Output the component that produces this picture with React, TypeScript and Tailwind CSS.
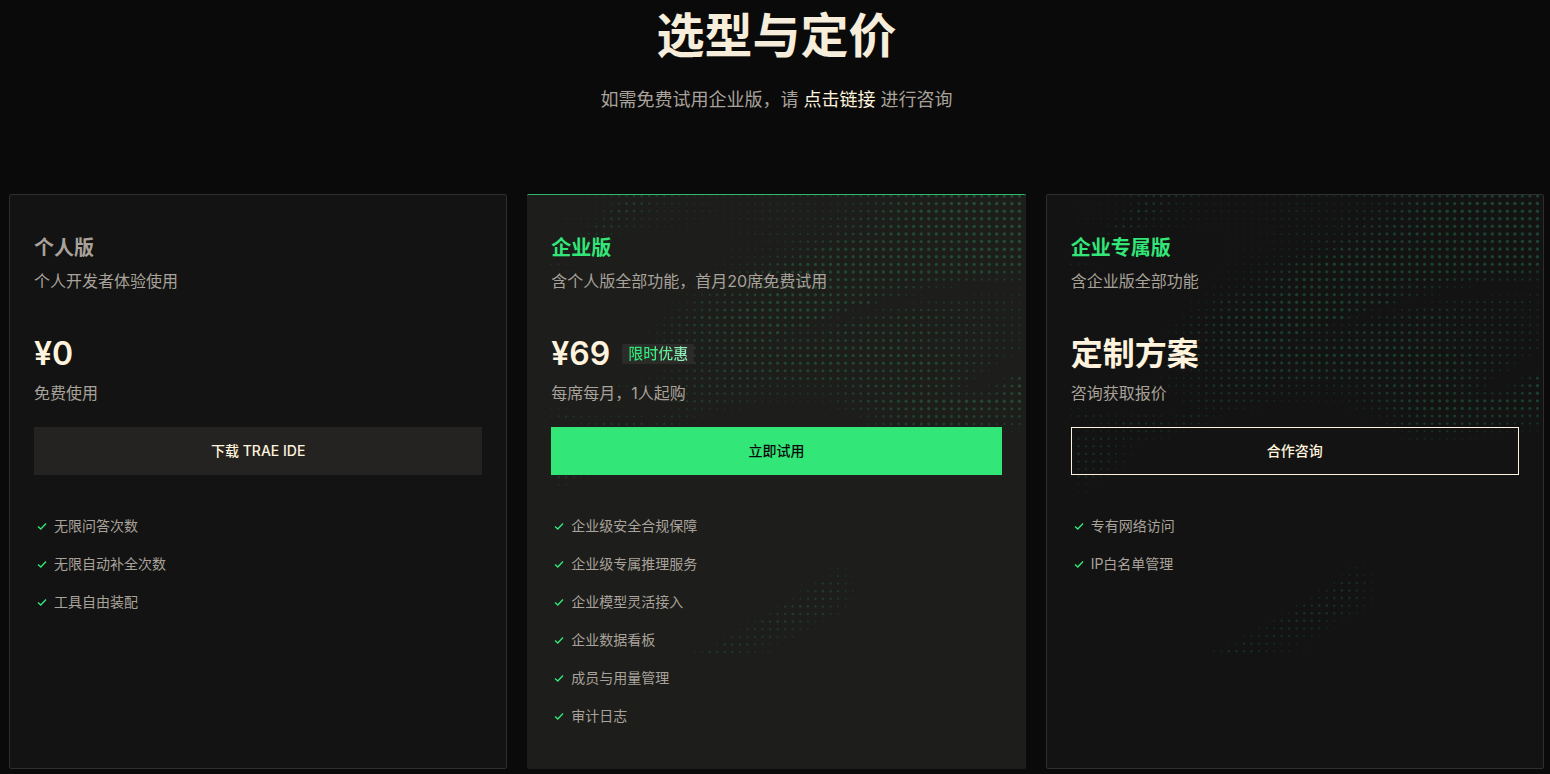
import React from 'react';

interface Plan {
  name: string;
  description: string;
  price: string;
  badge?: string;
  note: string;
  action: string;
  features: string[];
  variant: 'personal' | 'business' | 'dedicated';
}

const plans: Plan[] = [
  {
    name: '个人版',
    description: '个人开发者体验使用',
    price: '¥0',
    note: '免费使用',
    action: '下载 TRAE IDE',
    features: ['无限问答次数', '无限自动补全次数', '工具自由装配'],
    variant: 'personal',
  },
  {
    name: '企业版',
    description: '含个人版全部功能，首月20席免费试用',
    price: '¥69',
    badge: '限时优惠',
    note: '每席每月，1人起购',
    action: '立即试用',
    features: [
      '企业级安全合规保障',
      '企业级专属推理服务',
      '企业模型灵活接入',
      '企业数据看板',
      '成员与用量管理',
      '审计日志',
    ],
    variant: 'business',
  },
  {
    name: '企业专属版',
    description: '含企业版全部功能',
    price: '定制方案',
    note: '咨询获取报价',
    action: '合作咨询',
    features: ['专有网络访问', 'IP白名单管理'],
    variant: 'dedicated',
  },
];

const styles = {
  personal: {
    card: 'border border-[#2e2e2e] bg-[#131313]',
    name: 'text-[#a8a29a]',
    button: 'bg-[#252321] text-[#fff3de]',
  },
  business: {
    card: 'border-t border-[#30b868] bg-[#1d1d1b]',
    name: 'text-[#32e678]',
    button: 'bg-[#32e678] text-[#0a0a0a]',
  },
  dedicated: {
    card: 'border border-[#2e2e2e] bg-[#131313]',
    name: 'text-[#32e678]',
    button: 'border border-[#fff3de] text-[#fff3de]',
  },
};

// Halftone wave: row number -> "column:level" stops, levels 0-9 are blended between stops
const waveRows: Record<number, string> = {
  0: '1:0 6:1 9:4 12:5 15:4 18:2 24:1 29:2 36:3 45:6 55:8 62:8',
  1: '1:1 7:1 9:4 10:6 12:5 14:3 18:2 24:1 29:3 36:2 42:4 46:7 55:9 62:9',
  2: '1:0 6:1 8:4 9:6 11:5 14:2 20:2 25:1 29:3 36:2 40:4 45:7 50:9 62:9',
  3: '1:1 6:2 8:5 10:4 14:2 22:1 29:3 33:2 37:4 42:6 48:8 62:9',
  4: '4:0 6:4 7:5 10:3 15:1 25:1 30:2 35:3 41:6 47:8 62:9',
  5: '3:0 5:3 7:3 10:0 20:0 25:1 30:3 35:3 39:6 45:8 62:9',
  6: '2:0 4:2 5:4 7:1 10:0 20:0 26:1 30:2 35:5 40:7 62:9',
  7: '2:0 4:3 6:0 20:0 24:1 28:2 31:3 34:5 36:7 40:8 62:9',
  8: '20:0 23:1 27:2 30:4 35:7 40:8 62:9',
  9: '0:2 1:3 2:2 5:0 20:0 25:2 28:4 30:6 34:8 62:8',
  10: '0:0 2:1 4:0 19:0 23:2 27:5 31:7 36:8 58:8 62:6',
  11: '18:0 22:2 26:5 31:8 40:8 48:7 55:5 57:4 62:4',
  12: '17:0 20:2 24:4 27:6 31:8 43:7 46:6 48:5 50:3 53:2 54:0 61:0 62:1',
  13: '16:0 20:3 22:5 26:6 30:8 42:7 46:4 48:2 50:0 55:0 56:2 60:1 62:3',
  14: '15:0 18:2 20:5 25:6 29:8 36:8 42:7 43:4 44:1 46:0 47:1 50:3 53:4 60:4 62:2',
  15: '15:0 16:1 18:3 20:5 26:8 36:8 39:6 40:2 42:1 44:3 48:5 55:5 60:3 62:3',
  16: '14:0 16:3 18:5 21:7 27:8 36:8 37:4 39:1 40:3 43:5 47:7 52:6 58:4 62:3',
  17: '12:0 14:1 16:4 20:6 30:8 34:7 35:2 37:3 39:6 47:7 52:5 57:5 62:3',
  18: '11:0 14:2 17:5 23:7 30:8 32:5 35:5 39:7 50:7 58:5 62:3',
  19: '10:0 13:1 16:4 20:6 28:8 30:5 34:6 45:7 50:6 56:5 62:3',
  20: '10:0 14:2 18:5 24:7 29:7 45:8 52:6 57:5 62:3',
  21: '10:0 15:3 18:5 24:7 35:8 48:8 54:6 59:4 61:2 62:0',
  22: '9:0 13:2 18:5 24:7 50:8 55:6 58:4 59:2 60:0',
  23: '10:0 14:1 18:4 24:7 50:7 55:5 57:3 58:2 59:0 61:0 62:1',
  24: '8:0 14:2 18:4 24:6 52:7 55:5 56:2 57:0 59:0 60:2 61:5 62:7',
  25: '5:0 8:2 16:3 20:6 26:6 29:4 34:3 38:4 42:7 50:7 53:6 55:3 56:0 57:0 58:2 59:4 60:6 62:8',
  26: '12:0 16:3 22:5 28:4 33:3 36:3 42:6 50:7 54:5 57:4 59:6 62:8',
  27: '14:0 17:4 20:5 24:4 28:2 32:1 36:1 39:4 42:6 48:8 62:8',
  28: '0:1 1:2 2:1 3:0 15:0 18:3 20:3 26:0 36:0 37:1 41:4 45:7 50:8 62:7',
  29: '0:1 1:3 2:4 5:2 7:1 9:3 12:2 13:0 15:3 16:4 18:3 21:0 38:0 40:1 42:3 46:6 50:7 62:6',
  30: '2:0 4:2 7:4 12:4 13:2 15:4 18:1 19:0 41:0 42:2 44:4 47:6 54:6 58:4 62:4',
  31: '1:1 5:2 9:3 12:3 17:0 42:0 46:3 50:4 56:2 62:1',
  32: '0:2 1:4 4:4 8:3 14:0 43:0 46:3 50:2 58:0',
  33: '0:1 1:4 5:4 9:1 10:0',
  34: '0:1 1:5 5:4 7:2 9:0',
  35: '0:1 1:4 4:4 7:2 8:0',
  36: '0:1 1:4 4:3 7:1 8:0',
  37: '0:1 1:4 3:3 5:1 6:0',
  38: '1:2 3:1 5:0',
  39: '1:1 2:1 3:0',
  49: '37:1 38:2 39:1',
  50: '36:1 38:3 39:2 41:0',
  51: '34:0 35:2 36:4 38:4 39:3 40:1',
  52: '33:1 34:3 36:5 38:4 40:2 41:0',
  53: '31:0 32:2 34:4 36:5 38:4 40:1',
  54: '29:0 30:2 31:4 33:5 36:4 38:3 41:0',
  55: '27:0 29:2 30:4 32:5 36:4 38:2 40:0',
  56: '25:0 27:2 28:4 31:5 33:4 35:2 38:0',
  57: '24:0 26:3 30:4 33:3 36:0',
  58: '22:0 24:3 29:4 32:2 34:0',
  59: '20:0 22:2 23:4 26:4 29:2 32:0',
  60: '18:0 19:2 20:2 21:4 24:4 27:2 32:0',
};

const dots = Object.entries(waveRows).flatMap(([row, value]) => {
  const stops = value.split(' ').map((stop) => stop.split(':').map(Number));
  const result: { x: number; y: number; level: number }[] = [];
  for (let col = stops[0][0]; col <= stops[stops.length - 1][0]; col++) {
    const next = stops.findIndex((stop) => stop[0] >= col);
    const [endCol, endLevel] = stops[next];
    const [startCol, startLevel] = stops[Math.max(next - 1, 0)];
    const ratio = endCol === startCol ? 1 : (col - startCol) / (endCol - startCol);
    const level = startLevel + (endLevel - startLevel) * ratio;
    if (level > 0) {
      result.push({ x: 24 + col * 7.55, y: 1 + Number(row) * 7.6, level });
    }
  }
  return result;
});

const DotWave: React.FC = () => (
  <svg
    className="pointer-events-none absolute inset-0 h-full w-full"
    viewBox="0 0 498 574"
    preserveAspectRatio="none"
    aria-hidden="true"
  >
    {dots.map((dot) => (
      <circle
        key={`${dot.x}-${dot.y}`}
        cx={dot.x}
        cy={dot.y}
        r={0.8 + dot.level * 0.11}
        fill="#34d884"
        opacity={0.05 + dot.level * 0.022}
      />
    ))}
  </svg>
);

const CheckIcon: React.FC = () => (
  <svg className="size-4 shrink-0" viewBox="0 0 16 16" fill="none" aria-hidden="true">
    <path d="M4 8.4L6.8 11L12 5.4" stroke="#32e678" strokeWidth="1.4" />
  </svg>
);

const PlanCard: React.FC<{ plan: Plan }> = ({ plan }) => {
  const style = styles[plan.variant];

  return (
    <article className={`relative rounded-xs px-6 pt-[41px] pb-[42px] ${style.card}`}>
      {plan.variant !== 'personal' && <DotWave />}
      <div className="relative">
        <h2 className={`text-xl leading-6 font-bold ${style.name}`}>{plan.name}</h2>
        <p className="mt-[9px] text-base leading-6 text-[#a8a29a]">{plan.description}</p>

        <div className="mt-[37px] flex h-12 items-center gap-3">
          <strong className="text-[32px] leading-12 font-semibold text-[#fff3de]">{plan.price}</strong>
          {plan.badge && (
            <span className="rounded-xs bg-[#2b2b29] px-1.5 text-[15px] leading-5 font-medium">
              <span className="bg-linear-to-r from-[#32e678] from-40% to-[#9ceec6] bg-clip-text text-transparent">
                {plan.badge}
              </span>
            </span>
          )}
        </div>
        <p className="mt-[3px] text-base leading-6 text-[#a8a29a]">{plan.note}</p>

        <button type="button" className={`mt-[22px] h-12 w-full text-sm font-medium ${style.button}`}>
          {plan.action}
        </button>

        <ul className="mt-10 flex flex-col gap-4">
          {plan.features.map((feature) => (
            <li key={feature} className="flex items-center gap-1 text-sm leading-[22px] text-[#a8a29a]">
              <CheckIcon />
              {feature}
            </li>
          ))}
        </ul>
      </div>
    </article>
  );
};

const App: React.FC = () => {
  return (
    <main
      lang="zh-CN"
      className="min-h-screen bg-[#0a0a0a] pr-1.5 pb-1 pl-[9px] font-[Inter,'Noto_Sans_CJK_SC',sans-serif]"
    >
      <header className="text-center">
        <h1 className="text-5xl leading-[72px] font-bold text-[#f7eddb]">选型与定价</h1>
        <p className="mt-3.5 text-lg leading-7 text-[#a8a29a]">
          如需免费试用企业版，请{' '}
          <a href="#contact" className="text-[#fff3de]">
            点击链接
          </a>{' '}
          进行咨询
        </p>
      </header>

      <section className="mt-20 grid grid-cols-3 gap-5">
        {plans.map((plan) => (
          <PlanCard key={plan.name} plan={plan} />
        ))}
      </section>
    </main>
  );
};

export default App;
